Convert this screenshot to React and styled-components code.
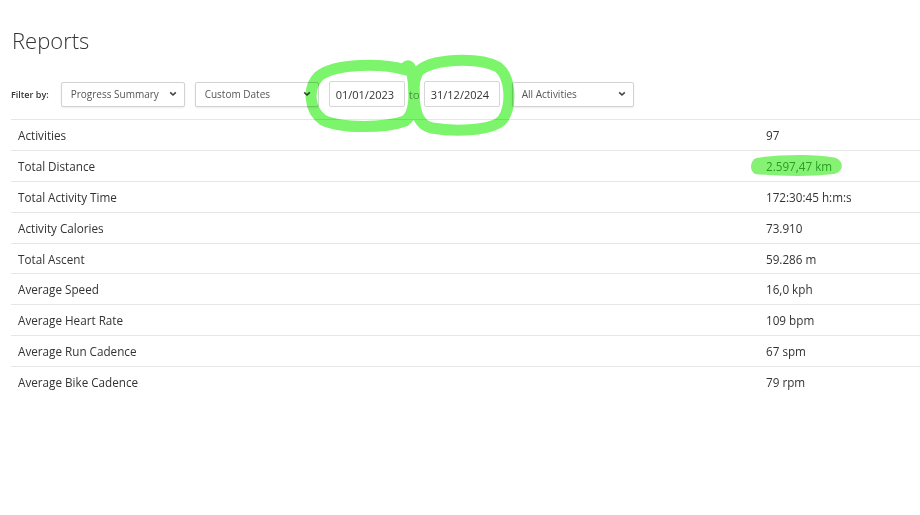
import React from "react";
import styled, { createGlobalStyle } from "styled-components";

const GlobalStyle = createGlobalStyle`
  html, body {
    margin: 0;
    padding: 0;
    background: #ffffff;
  }
  body {
    font-family: "Open Sans", "Noto Sans", sans-serif;
    color: #333333;
  }
`;

const Page = styled.div`
  position: relative;
  width: 920px;
  height: 515px;
  overflow: hidden;
  padding-left: 11px;
  box-sizing: border-box;
`;

const Title = styled.h1`
  margin: 0;
  padding: 26px 0 0 1px;
  font-size: 22px;
  font-weight: 300;
  line-height: 28px;
  color: #333333;
`;

const FilterBar = styled.div`
  display: flex;
  align-items: center;
  margin-top: 27px;
  height: 26px;
`;

const FilterLabel = styled.span`
  font-size: 9px;
  font-weight: 600;
  color: #333333;
  margin-right: 12px;
`;

const Select = styled.div`
  box-sizing: border-box;
  width: ${(p) => p.$width}px;
  height: 25px;
  margin-left: ${(p) => p.$before ?? 0}px;
  border: 1px solid #d2d2d2;
  border-radius: 2px;
  box-shadow: 0 1px 2px rgba(0, 0, 0, 0.08);
  display: flex;
  align-items: center;
  justify-content: space-between;
  padding: 0 7px 0 9px;
  font-size: 10px;
  color: #555555;
  background: #ffffff;
`;

const Chevron = () => (
  <svg width="8" height="6" viewBox="0 0 8 6">
    <path d="M1.2 1.3 L4 4 L6.8 1.3" fill="none" stroke="#444" strokeWidth="1.6" />
  </svg>
);

const DateInput = styled.div`
  box-sizing: border-box;
  width: 76px;
  height: 26px;
  margin-left: ${(p) => p.$before ?? 0}px;
  border: 1px solid #d6d6d6;
  border-radius: 2px;
  display: flex;
  align-items: center;
  padding-left: 6px;
  font-size: 11px;
  color: #333333;
  background: #ffffff;
`;

const ToLabel = styled.span`
  font-size: 11.5px;
  color: #9a9a9a;
  margin: 0 4px 0 4px;
`;

const Table = styled.div`
  margin-top: 12px;
  display: flex;
  flex-direction: column;
`;

const Row = styled.div`
  display: grid;
  grid-template-columns: 755px 1fr;
  height: 30.9px;
  align-items: center;
  border-top: 1px solid #e6e6e6;
  box-sizing: border-box;
  font-size: 11.7px;
  color: #333333;
`;

const Label = styled.span`
  padding-left: 7px;
`;

const Value = styled.span`
  color: ${(p) => (p.$marked ? "#4aa84a" : "#333333")};
`;

const Markup = styled.svg`
  position: absolute;
  left: 0;
  top: 0;
  pointer-events: none;
  mix-blend-mode: multiply;
`;

const rows = [
  ["Activities", "97"],
  ["Total Distance", "2.597,47 km", true],
  ["Total Activity Time", "172:30:45 h:m:s"],
  ["Activity Calories", "73.910"],
  ["Total Ascent", "59.286 m"],
  ["Average Speed", "16,0 kph"],
  ["Average Heart Rate", "109 bpm"],
  ["Average Run Cadence", "67 spm"],
  ["Average Bike Cadence", "79 rpm"],
];

export default function App() {
  return (
    <>
      <GlobalStyle />
      <Page>
        <Title>Reports</Title>
        <FilterBar>
          <FilterLabel>Filter by:</FilterLabel>
          <Select $width={124}>
            <span>Progress Summary</span>
            <Chevron />
          </Select>
          <Select $width={124} $before={10}>
            <span>Custom Dates</span>
            <Chevron />
          </Select>
          <DateInput $before={10}>01/01/2023</DateInput>
          <ToLabel>to</ToLabel>
          <DateInput>31/12/2024</DateInput>
          <Select $width={122} $before={12}>
            <span>All Activities</span>
            <Chevron />
          </Select>
        </FilterBar>
        <Table>
          {rows.map(([k, v, marked]) => (
            <Row key={k}>
              <Label>{k}</Label>
              <Value $marked={marked}>{v}</Value>
            </Row>
          ))}
        </Table>

        {/* highlighter marks: loops around the date range, stroke over the distance */}
        <Markup width="920" height="515" viewBox="0 0 920 515">
          <g fill="none" stroke="#7cf46c" strokeWidth="11" strokeLinecap="round" strokeLinejoin="round">
            <path d="M406 70 C382 63 336 63 319 76 C307 88 309 110 323 120 C341 129 386 128 405 121 C416 113 415 90 412 73 C411 67 409 64 406 67" />
            <path d="M418 72 C430 58 479 57 498 67 C511 77 512 105 503 119 C494 131 455 132 432 128 C416 125 414 106 414 89 C414 81 416 76 418 72" />
          </g>
          <path d="M756 158 C780 154 820 154 836 158 C845 162 843 172 834 174 C810 177 775 176 755 174 C749 170 750 161 756 158 Z" fill="#86f274" />
        </Markup>
      </Page>
    </>
  );
}
